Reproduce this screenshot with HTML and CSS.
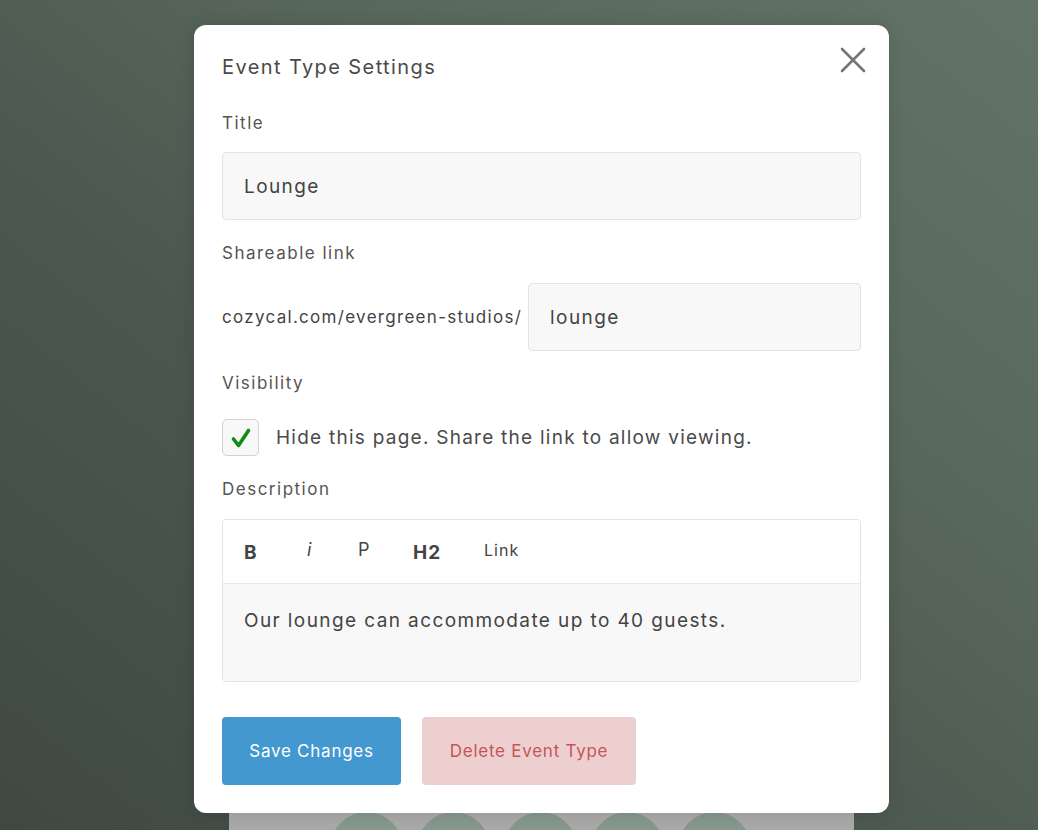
FILE: index.html
```html
<!DOCTYPE html>
<html lang="en">
<head>
<meta charset="utf-8">
<title>Event Type Settings</title>
<link rel="stylesheet" href="styles.css">
</head>
<body>
<div class="backpage">
  <span class="dot"></span><span class="dot"></span><span class="dot"></span><span class="dot"></span><span class="dot"></span>
</div>
<div class="modal">
  <div class="modal-head">
    <h1 class="modal-title">Event Type Settings</h1>
    <button class="close" aria-label="Close">
      <svg width="26" height="26" viewBox="0 0 26 26"><path d="M2 2 L24 24 M24 2 L2 24" stroke="#767676" stroke-width="2.6" stroke-linecap="round" fill="none"/></svg>
    </button>
  </div>

  <div class="label lbl-title">Title</div>
  <div class="input">Lounge</div>

  <div class="label lbl-link">Shareable link</div>
  <div class="link-row">
    <span class="prefix">cozycal.com/evergreen-studios/</span>
    <div class="input input-slug">lounge</div>
  </div>

  <div class="label lbl-vis">Visibility</div>
  <div class="check-row">
    <span class="checkbox">
      <svg width="22" height="22" viewBox="0 0 22 22"><path d="M3.5 12 L8.5 18.5 L18.5 3.5" stroke="#118a16" stroke-width="3.6" stroke-linecap="round" stroke-linejoin="round" fill="none"/></svg>
    </span>
    <span class="check-label">Hide this page. Share the link to allow viewing.</span>
  </div>

  <div class="label lbl-desc">Description</div>
  <div class="editor">
    <div class="toolbar">
      <span class="tool tool-b">B</span>
      <span class="tool tool-i">i</span>
      <span class="tool tool-p">P</span>
      <span class="tool tool-h">H2</span>
      <span class="tool tool-link">Link</span>
    </div>
    <div class="editor-body">Our lounge can accommodate up to 40 guests.</div>
  </div>

  <div class="actions">
    <button class="btn btn-save">Save Changes</button>
    <button class="btn btn-delete">Delete Event Type</button>
  </div>
</div>
</body>
</html>
```

FILE: styles.css
```css
* { box-sizing: border-box; }
html, body { margin: 0; padding: 0; height: 100%; }
body {
  width: 1038px;
  height: 830px;
  overflow: hidden;
  position: relative;
  font-family: "Inter", "Lato", "Liberation Sans", sans-serif;
  color: #4a4a4a;
  background: linear-gradient(to top right, #3f4941 0%, #4c584f 40%, #5a695e 70%, #637367 100%);
}

.backpage {
  position: absolute;
  left: 229px;
  top: 790px;
  width: 625px;
  height: 40px;
  background: #a9a9a9;
  display: flex;
  gap: 14px;
  padding-left: 101px;
  overflow: hidden;
}
.dot {
  flex: none;
  width: 73px;
  height: 73px;
  border-radius: 50%;
  background: #86978c;
  margin-top: 22px;
}

.modal {
  position: relative;
  z-index: 2;
  margin: 25px 0 0 194px;
  width: 695px;
  height: 788px;
  background: #fff;
  border-radius: 12px;
  padding: 28px 28px 28px 28px;
  display: flex;
  flex-direction: column;
  box-shadow: 0 0 18px rgba(0,0,0,0.12);
}

.modal-head {
  height: 28px;
  display: flex;
  align-items: center;
  justify-content: space-between;
}
.modal-title {
  margin: 0;
  font-size: 20px;
  font-weight: 400;
  color: #4a4a4a;
  line-height: 28px;
  letter-spacing: 1.4px;
}
.close {
  border: 0;
  background: none;
  padding: 0;
  margin: -14px -5px 0 0;
  width: 26px;
  height: 26px;
  display: flex;
}

.label {
  font-size: 17px;
  line-height: 24px;
  color: #555;
  letter-spacing: 1.5px;
}
.lbl-title { margin-top: 30px; }
.lbl-link { margin-top: 21px; }
.lbl-vis { margin-top: 20px; }
.lbl-desc { margin-top: 21px; }

.input {
  margin-top: 17px;
  height: 68px;
  border: 1.5px solid #e3e3e3;
  border-radius: 4px;
  background: #f8f8f8;
  display: flex;
  align-items: center;
  padding-left: 21px;
  font-size: 19px;
  color: #444;
  letter-spacing: 1.4px;
}

.link-row {
  margin-top: 18px;
  display: flex;
  align-items: center;
  gap: 6px;
}
.prefix {
  font-size: 17px;
  color: #444;
  white-space: nowrap;
  letter-spacing: 1.3px;
}
.input-slug {
  margin-top: 0;
  flex: 1;
}

.check-row {
  margin-top: 24px;
  display: flex;
  align-items: center;
  gap: 17px;
  height: 37px;
}
.checkbox {
  width: 37px;
  height: 37px;
  border: 1.5px solid #d2d2d2;
  border-radius: 5px;
  background: #f8f8f8;
  display: flex;
  align-items: center;
  justify-content: center;
}
.check-label {
  font-size: 19px;
  color: #4a4a4a;
  letter-spacing: 1.25px;
}

.editor {
  margin-top: 18px;
  height: 163px;
  border: 1.5px solid #e3e3e3;
  border-radius: 4px;
  overflow: hidden;
  display: flex;
  flex-direction: column;
}
.toolbar {
  height: 64px;
  background: #fff;
  border-bottom: 1.5px solid #e8e8e8;
  display: flex;
  align-items: center;
  padding-left: 21px;
  color: #444;
}
.tool { font-size: 17px; line-height: 24px; flex: none; }
.tool-b { font-weight: 700; font-size: 19px; width: 62px; margin-top: 3px; }
.tool-i { font-style: italic; width: 52px; margin-top: -3px; padding-left: 1px; font-size: 18px; }
.tool-p { width: 55px; margin-top: -3px; font-size: 18px; }
.tool-h { font-weight: 700; font-size: 19px; width: 71px; margin-top: 3px; letter-spacing: 1px; }
.tool-link { font-size: 16px; margin-top: -3px; letter-spacing: 1px; }

.editor-body {
  flex: 1;
  background: #f8f8f8;
  padding: 24px 21px 0 21px;
  font-size: 19px;
  line-height: 26px;
  color: #444;
  letter-spacing: 1.4px;
}

.actions {
  margin-top: 35px;
  display: flex;
  gap: 21px;
}
.btn {
  height: 68px;
  border: 0;
  border-radius: 4px;
  font-family: inherit;
  font-size: 17px;
  padding: 0;
  letter-spacing: 0.75px;
}
.btn-save {
  width: 179px;
  background: #4398cf;
  color: #fff;
}
.btn-delete {
  width: 214px;
  background: #eecfd0;
  color: #c6555a;
}
```
